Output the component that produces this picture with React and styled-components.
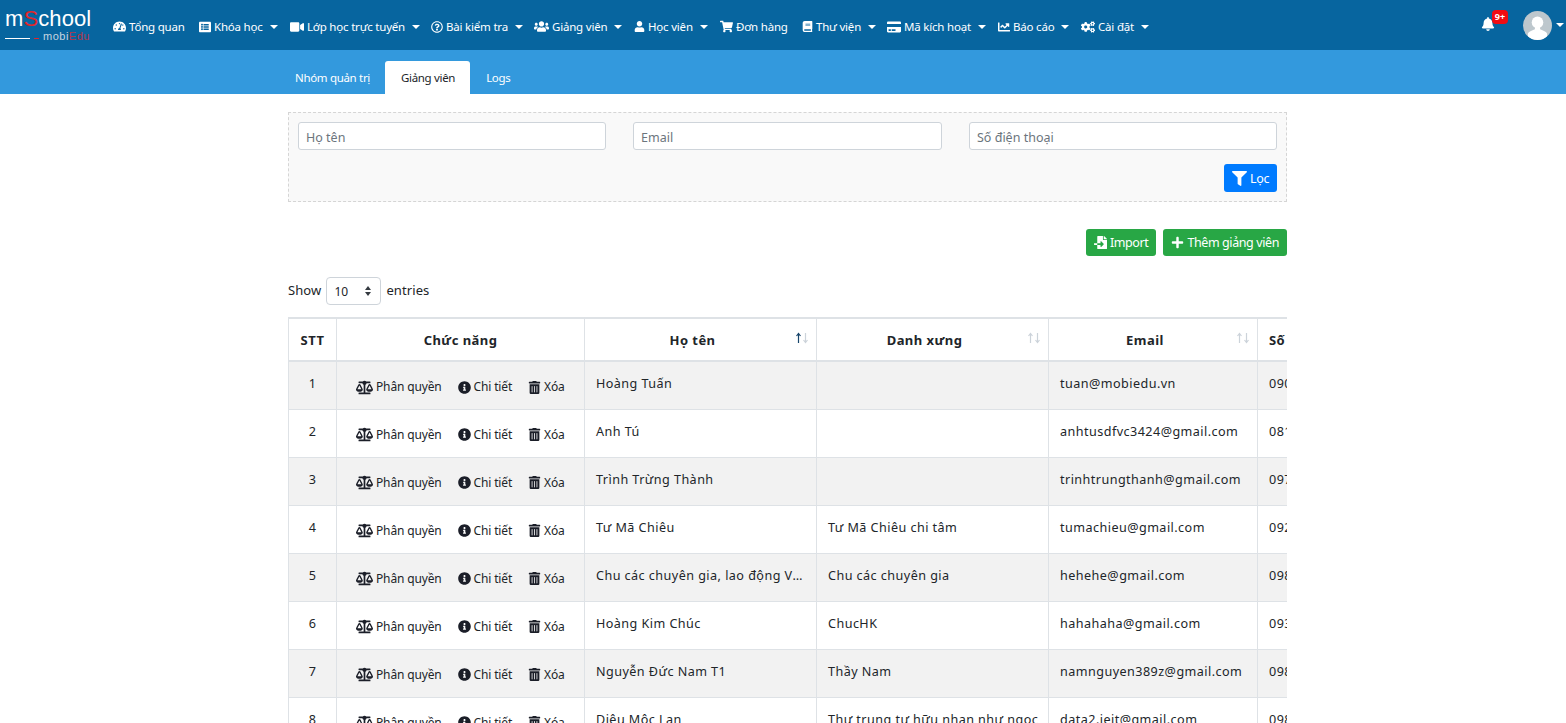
import React from 'react';
import styled, { createGlobalStyle } from 'styled-components';
import {
  FaTachometerAlt, FaListAlt, FaVideo, FaRegQuestionCircle, FaUsers, FaUser, FaShoppingCart,
  FaBook, FaCreditCard, FaChartLine, FaCogs, FaBell, FaFilter, FaFileImport, FaPlus,
  FaBalanceScale, FaInfoCircle, FaTrashAlt,
} from 'react-icons/fa';

const GlobalStyle = createGlobalStyle`
  html, body {
    margin: 0;
    height: 723px;
    overflow: hidden;
    background: #fff;
  }
  body {
    font-family: "Noto Sans", "Open Sans", "Liberation Sans", sans-serif;
    font-size: 13px;
    color: #212529;
  }
  * { box-sizing: border-box; }
`;

const Navbar = styled.div`
  height: 50px;
  background: #07659f;
  display: flex;
  align-items: center;
  color: #fff;
`;

const Logo = styled.div`
  width: 113px;
  height: 50px;
  flex: none;
  padding: 8px 0 0 5px;
  font-family: "Liberation Sans", sans-serif;
`;

const LogoName = styled.div`
  font-size: 22px;
  line-height: 22px;
  letter-spacing: 0.1px;
  color: #fff;
  span { color: #e0262c; }
`;

const LogoFoot = styled.div`
  display: flex;
  align-items: center;
  font-size: 11px;
  line-height: 12px;
  letter-spacing: 0.5px;
  color: #c8d4e0;
  i {
    display: block;
    height: 1px;
    width: 25px;
    background: #fff;
    margin: 4px 4px 0 0;
  }
  b {
    display: block;
    height: 1px;
    width: 5px;
    background: #e0262c;
    margin: 4px 4px 0 0;
  }
  span { color: #b5364a; }
`;

const NavItem = styled.div`
  display: flex;
  align-items: center;
  gap: 3px;
  flex: none;
  width: ${(p) => (p.$w ? `${p.$w}px` : 'auto')};
  padding-top: 3px;
  font-size: 11.5px;
  letter-spacing: -0.2px;
  white-space: nowrap;
  svg { flex: none; font-size: ${(p) => p.$icon}px; }
`;

const Caret = styled.span`
  width: 0;
  height: 0;
  margin-left: ${(p) => p.$ml}px;
  border-top: 4px solid #fff;
  border-left: 4px solid transparent;
  border-right: 4px solid transparent;
`;

const NavRight = styled.div`
  margin-left: auto;
  display: flex;
  align-items: center;
  padding-right: 2px;
`;

const BellWrap = styled.div`
  position: relative;
  width: 14px;
  height: 16px;
  margin-right: 28px;
  svg { display: block; font-size: 14px; }
`;

const Badge = styled.span`
  position: absolute;
  left: 11px;
  top: -7px;
  width: 16px;
  height: 14px;
  border-radius: 4px;
  background: #f00c12;
  color: #fff;
  font-size: 9px;
  font-weight: 700;
  line-height: 14px;
  text-align: center;
`;

const Avatar = styled.div`
  width: 29px;
  height: 29px;
  border-radius: 50%;
  overflow: hidden;
  background: #bdc7cd;
  margin-right: 4px;
  svg { display: block; }
`;

const SubBar = styled.div`
  height: 44px;
  background: #3399dd;
  display: flex;
  align-items: flex-end;
  padding-left: 280px;
`;

const Tab = styled.div`
  height: 33px;
  padding: 0 15px 0 ${(p) => (p.$active ? 16 : 15)}px;
  display: flex;
  align-items: center;
  font-size: 11.5px;
  letter-spacing: -0.32px;
  border-radius: 3px 3px 0 0;
  margin-right: ${(p) => (p.$active ? 1 : 0)}px;
  color: ${(p) => (p.$active ? '#212529' : '#fff')};
  background: ${(p) => (p.$active ? '#fff' : 'transparent')};
`;

const Page = styled.div`
  width: 999px;
  margin-left: 288px;
  padding-top: 18px;
`;

const FilterBox = styled.div`
  height: 90px;
  border: 1px dashed #d5d5d5;
  background: #f9f9f9;
  padding: 9px;
`;

const FilterRow = styled.div`
  display: grid;
  grid-template-columns: 308px 309px 308px;
  justify-content: space-between;
`;

const Input = styled.input`
  height: 28px;
  width: 100%;
  border: 1px solid #ced4da;
  border-radius: 3px;
  background: #fff;
  padding: 2px 7px 0;
  font: inherit;
  font-size: 12.5px;
  &::placeholder { color: #6c757d; opacity: 1; }
`;

const FilterFoot = styled.div`
  display: flex;
  justify-content: flex-end;
  margin-top: 14px;
`;

const Button = styled.div`
  height: ${(p) => p.$h}px;
  display: flex;
  align-items: center;
  gap: 3px;
  padding: 0 8px;
  border-radius: 3px;
  color: #fff;
  font-size: 12.5px;
  letter-spacing: -0.4px;
  white-space: nowrap;
  background: ${(p) => p.$bg};
  svg { flex: none; font-size: ${(p) => p.$icon}px; }
`;

const ActionRow = styled.div`
  display: flex;
  justify-content: flex-end;
  gap: 7px;
  margin-top: 27px;
`;

const LengthRow = styled.div`
  display: flex;
  align-items: center;
  gap: 5px;
  margin-top: 21px;
  height: 28px;
  padding-bottom: 2px;
  font-size: 13px;
  letter-spacing: 0.1px;
`;

const FakeSelect = styled.div`
  width: 55px;
  height: 28px;
  margin-bottom: -2px;
  border: 1px solid #ced4da;
  border-radius: 4px;
  display: flex;
  align-items: center;
  justify-content: space-between;
  padding: 0 9px 0 7px;
  font-size: 12px;
`;

const SelectArrows = styled.span`
  display: flex;
  flex-direction: column;
  gap: 2px;
  i { width: 0; height: 0; border-left: 3px solid transparent; border-right: 3px solid transparent; }
  i:first-child { border-bottom: 4px solid #343a40; }
  i:last-child { border-top: 4px solid #343a40; }
`;

const TableWrap = styled.div`
  margin-top: 12px;
  overflow: hidden;
`;

const Table = styled.table`
  border-collapse: collapse;
  table-layout: fixed;
  width: 1200px;
  font-size: 12.6px;
  letter-spacing: 0.45px;
`;

const Th = styled.th`
  position: relative;
  height: 43px;
  padding: 0 ${(p) => (p.$sorted ? 27 : 11)}px 0 11px;
  border: 1px solid #dee2e6;
  border-top-width: 2px;
  border-bottom-width: 2px;
  font-size: 13px;
  font-weight: 700;
  text-align: ${(p) => (p.$left ? 'left' : 'center')};
  white-space: nowrap;
  overflow: hidden;
`;

const SortIcon = styled.svg`
  position: absolute;
  right: 7px;
  top: 13px;
`;

const Tr = styled.tr`
  height: 48px;
  background: ${(p) => (p.$odd ? '#f2f2f2' : '#fff')};
`;

const Td = styled.td`
  padding: 13px ${(p) => (p.$tight ? 8 : 11)}px 0 11px;
  height: 48px;
  vertical-align: top;
  border: 1px solid #dee2e6;
  white-space: nowrap;
  overflow: hidden;
  text-overflow: ellipsis;
  line-height: 18px;
  text-align: ${(p) => (p.$center ? 'center' : 'left')};
`;

const ActionCell = styled.td`
  padding: 16px 0 0 19px;
  height: 48px;
  vertical-align: top;
  border: 1px solid #dee2e6;
  white-space: nowrap;
  overflow: hidden;
`;

const ActionLinks = styled.div`
  display: flex;
  gap: 16px;
  font-size: 12px;
  letter-spacing: -0.15px;
  line-height: 18px;
`;

const ActionLink = styled.span`
  display: flex;
  align-items: center;
  gap: 3px;
  color: #212529;
  svg { flex: none; font-size: ${(p) => p.$icon}px; color: #1b1e28; }
`;

const menu = [
  { icon: FaTachometerAlt, label: 'Tổng quan', w: 86, size: 13 },
  { icon: FaListAlt, label: 'Khóa học', caret: true, w: 91, size: 12 },
  { icon: FaVideo, label: 'Lớp học trực tuyến', caret: true, w: 141, size: 14 },
  { icon: FaRegQuestionCircle, label: 'Bài kiểm tra', caret: true, w: 103, size: 12 },
  { icon: FaUsers, label: 'Giảng viên', caret: true, w: 100, size: 15 },
  { icon: FaUser, label: 'Học viên', caret: true, w: 86, size: 11 },
  { icon: FaShoppingCart, label: 'Đơn hàng', w: 82, size: 13 },
  { icon: FaBook, label: 'Thư viện', caret: true, w: 85, size: 11 },
  { icon: FaCreditCard, label: 'Mã kích hoạt', caret: true, w: 111, size: 14 },
  { icon: FaChartLine, label: 'Báo cáo', caret: true, w: 83, size: 12 },
  { icon: FaCogs, label: 'Cài đặt', caret: true, size: 14 },
];

const rows = [
  ['Hoàng Tuấn', '', 'tuan@mobiedu.vn', '0900000000'],
  ['Anh Tú', '', 'anhtusdfvc3424@gmail.com', '0810000000'],
  ['Trình Trừng Thành', '', 'trinhtrungthanh@gmail.com', '0970000000'],
  ['Tư Mã Chiêu', 'Tư Mã Chiêu chi tâm', 'tumachieu@gmail.com', '0920000000'],
  ['Chu các chuyên gia, lao động Việt Nam', 'Chu các chuyên gia', 'hehehe@gmail.com', '0980000000'],
  ['Hoàng Kim Chúc', 'ChucHK', 'hahahaha@gmail.com', '0930000000'],
  ['Nguyễn Đức Nam T1', 'Thầy Nam', 'namnguyen389z@gmail.com', '0980000000'],
  ['Diêu Mộc Lan', 'Thư trung tự hữu nhan như ngọc', 'data2.jeit@gmail.com', '0980000000'],
];

const Sort = ({ active }) => (
  <SortIcon width="14" height="12" viewBox="0 0 14 12">
    <path d="M3.5 11V2M1.5 4l2-2.5 2 2.5" fill="none" strokeWidth="1.2" stroke={active ? '#17456b' : '#ccd3da'} />
    <path d="M10.5 1v9M8.5 8l2 2.5 2-2.5" fill="none" strokeWidth="1.2" stroke="#ccd3da" />
  </SortIcon>
);

const App = () => {
  return (
    <>
      <GlobalStyle />
      <Navbar>
        <Logo>
          <LogoName>m<span>S</span>chool</LogoName>
          <LogoFoot><i /><b />mobi<span>Edu</span></LogoFoot>
        </Logo>
        {menu.map((m) => (
          <NavItem key={m.label} $w={m.w} $icon={m.size}>
            <m.icon />
            {m.label}
            {m.caret && <Caret $ml={4} />}
          </NavItem>
        ))}
        <NavRight>
          <BellWrap>
            <FaBell />
            <Badge>9+</Badge>
          </BellWrap>
          <Avatar>
            <svg width="29" height="29" viewBox="0 0 28 28">
              <circle cx="14" cy="11" r="5.6" fill="#fff" />
              <path d="M11.5 15h5v2.500c3 1.400 6 2 6.800 4.500V28H4.700v-6c.8-2.500 3.800-3.100 6.800-4.500z" fill="#fff" />
            </svg>
          </Avatar>
          <Caret $ml={0} />
        </NavRight>
      </Navbar>
      <SubBar>
        <Tab>Nhóm quản trị</Tab>
        <Tab $active>Giảng viên</Tab>
        <Tab>Logs</Tab>
      </SubBar>
      <Page>
        <FilterBox>
          <FilterRow>
            <Input placeholder="Họ tên" />
            <Input placeholder="Email" />
            <Input placeholder="Số điện thoại" />
          </FilterRow>
          <FilterFoot>
            <Button $h={28} $bg="#007bff" $icon={15}><FaFilter />Lọc</Button>
          </FilterFoot>
        </FilterBox>
        <ActionRow>
          <Button $h={27} $bg="#28a745" $icon={13}><FaFileImport />Import</Button>
          <Button $h={27} $bg="#28a745" $icon={13}><FaPlus />Thêm giảng viên</Button>
        </ActionRow>
        <LengthRow>
          Show
          <FakeSelect>10<SelectArrows><i /><i /></SelectArrows></FakeSelect>
          entries
        </LengthRow>
        <TableWrap>
          <Table>
            <colgroup>
              <col width="48" />
              <col width="248" />
              <col width="232" />
              <col width="232" />
              <col width="209" />
              <col width="231" />
            </colgroup>
            <thead>
              <tr>
                <Th>STT</Th>
                <Th>Chức năng</Th>
                <Th $sorted>Họ tên<Sort active /></Th>
                <Th $sorted>Danh xưng<Sort /></Th>
                <Th $sorted>Email<Sort /></Th>
                <Th $left>Số điện thoại</Th>
              </tr>
            </thead>
            <tbody>
              {rows.map((r, i) => (
                <Tr key={i} $odd={i % 2 === 0}>
                  <Td $center>{i + 1}</Td>
                  <ActionCell>
                    <ActionLinks>
                      <ActionLink $icon={17}><FaBalanceScale />Phân quyền</ActionLink>
                      <ActionLink $icon={13}><FaInfoCircle />Chi tiết</ActionLink>
                      <ActionLink $icon={13}><FaTrashAlt />Xóa</ActionLink>
                    </ActionLinks>
                  </ActionCell>
                  {r.map((c, j) => <Td key={j} $tight={j === 1}>{c}</Td>)}
                </Tr>
              ))}
            </tbody>
          </Table>
        </TableWrap>
      </Page>
    </>
  );
};

export default App;
